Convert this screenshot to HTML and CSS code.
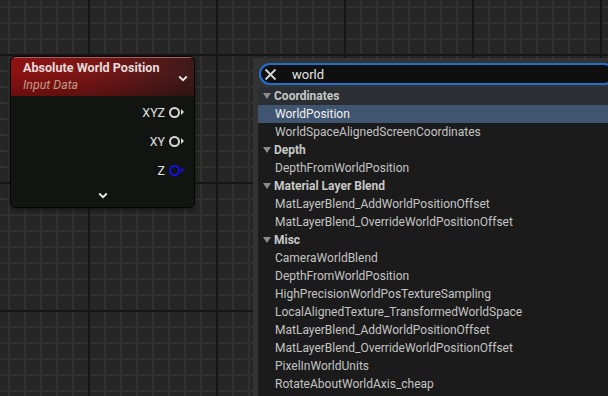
FILE: index.html
```html
<!DOCTYPE html>
<html lang="en">
<head>
  <meta charset="UTF-8">
  <meta name="viewport" content="width=device-width, initial-scale=1.0">
  <title>Material Graph</title>
  <link rel="stylesheet" href="styles.css">
</head>
<body>

<div class="graph">

  <!-- material expression node -->
  <div class="node">
    <div class="node-header">
      <div class="node-titles">
        <div class="node-title">Absolute World Position</div>
        <div class="node-sub">Input Data</div>
      </div>
      <svg class="chevron" width="10" height="7" viewBox="0 0 10 7"><path d="M1.2 1.5 L5 5.2 L8.8 1.5" fill="none" stroke="#e8e8e8" stroke-width="1.8"/></svg>
    </div>
    <div class="pins">
      <div class="pin-row"><span>XYZ</span><span class="pin"></span></div>
      <div class="pin-row"><span>XY</span><span class="pin"></span></div>
      <div class="pin-row"><span>Z</span><span class="pin blue"></span></div>
    </div>
    <div class="node-footer">
      <svg width="10" height="7" viewBox="0 0 10 7"><path d="M1.2 1.5 L5 5.2 L8.8 1.5" fill="none" stroke="#e8e8e8" stroke-width="1.8"/></svg>
    </div>
  </div>

  <!-- action menu -->
  <div class="menu">
    <div class="search">
      <svg class="clear" width="13" height="13" viewBox="0 0 13 13"><path d="M1.5 1.5 L11.5 11.5 M11.5 1.5 L1.5 11.5" stroke="#d6d6d6" stroke-width="1.8"/></svg>
      <span class="query">world</span>
    </div>
    <div class="list">
      <div class="row cat"><span class="tri"></span>Coordinates</div>
      <div class="row selected">WorldPosition</div>
      <div class="row">WorldSpaceAlignedScreenCoordinates</div>
      <div class="row cat"><span class="tri"></span>Depth</div>
      <div class="row">DepthFromWorldPosition</div>
      <div class="row cat"><span class="tri"></span>Material Layer Blend</div>
      <div class="row">MatLayerBlend_AddWorldPositionOffset</div>
      <div class="row">MatLayerBlend_OverrideWorldPositionOffset</div>
      <div class="row cat"><span class="tri"></span>Misc</div>
      <div class="row">CameraWorldBlend</div>
      <div class="row">DepthFromWorldPosition</div>
      <div class="row">HighPrecisionWorldPosTextureSampling</div>
      <div class="row">LocalAlignedTexture_TransformedWorldSpace</div>
      <div class="row">MatLayerBlend_AddWorldPositionOffset</div>
      <div class="row">MatLayerBlend_OverrideWorldPositionOffset</div>
      <div class="row">PixelInWorldUnits</div>
      <div class="row">RotateAboutWorldAxis_cheap</div>
    </div>
  </div>

</div>

</body>
</html>
```

FILE: styles.css
```css
body {
  margin: 0;
  padding: 0;
  font-family: Roboto, "Noto Sans", sans-serif;
  overflow: hidden;
}
.graph {
  position: relative;
  width: 608px;
  height: 396px;
  overflow: hidden;
  background:
    linear-gradient(to right, #161616 2px, transparent 2px) 88px 0 / 128px 128px,
    linear-gradient(to bottom, #161616 2px, transparent 2px) 0 54px / 128px 128px,
    linear-gradient(to right, #303030 2px, transparent 2px) 8px 0 / 16px 16px,
    linear-gradient(to bottom, #303030 2px, transparent 2px) 0 6px / 16px 16px,
    #262626;
}

/* node */
.node {
  position: absolute;
  left: 10px;
  top: 56px;
  width: 183px;
  height: 150px;
  background: #121412;
  border: 1px solid #050505;
  border-radius: 6px;
  box-shadow: 0 2px 4px rgba(0, 0, 0, 0.4);
  overflow: hidden;
  display: flex;
  flex-direction: column;
}
.node-header {
  height: 38px;
  display: flex;
  align-items: center;
  padding: 0 6px 0 12px;
  background:
    linear-gradient(to bottom, rgba(0, 0, 0, 0) 40%, rgba(0, 0, 0, 0.25) 100%),
    linear-gradient(to right, #8e1212 0%, #7a1616 45%, #3e1a1a 100%);
  border-top: 1px solid #b35a5a;
}
.node-titles {
  flex: 1;
}
.node-title {
  color: #e6dcdc;
  font-size: 12.6px;
  font-weight: bold;
  line-height: 16px;
  margin-top: -1px;
}
.node-sub {
  color: #c69a84;
  font-size: 12.4px;
  font-style: italic;
  line-height: 16px;
  margin-top: 1px;
}
.chevron {
  margin-top: 2px;
}
.pins {
  padding-top: 8px;
  display: flex;
  flex-direction: column;
  gap: 12px;
}
.pin-row {
  height: 17px;
  display: flex;
  justify-content: flex-end;
  align-items: center;
  gap: 4px;
  padding-right: 10px;
  color: #e0e0e0;
  font-size: 12.4px;
}
.pin {
  position: relative;
  width: 7px;
  height: 7px;
  border: 2px solid #d8d8d8;
  border-radius: 50%;
  margin-right: 4px;
}
.pin::after {
  content: "";
  position: absolute;
  right: -6px;
  top: 0;
  border-left: 3px solid #d8d8d8;
  border-top: 3.5px solid transparent;
  border-bottom: 3.5px solid transparent;
}
.pin.blue {
  border-color: #1010e6;
}
.pin.blue::after {
  border-left-color: #1010e6;
}
.node-footer {
  flex: 1;
  display: flex;
  justify-content: center;
  align-items: center;
  padding-top: 4px;
}

/* menu */
.menu {
  position: absolute;
  left: 253px;
  top: 58px;
  width: 362px;
  height: 345px;
  background: #333333;
  padding: 5px 0 0 5px;
  box-sizing: border-box;
}
.search {
  height: 22px;
  box-sizing: border-box;
  margin-left: 1px;
  border: 2px solid #2170d0;
  border-radius: 11px;
  background: #0f0f0f;
  display: flex;
  align-items: center;
  padding-left: 3px;
}
.clear {
  margin-right: 15px;
}
.query {
  color: #e4e4e4;
  font-size: 13px;
}
.list {
  background: #1b1b1b;
  margin-top: 2px;
  height: 320px;
}
.row {
  height: 18px;
  line-height: 18px;
  padding-left: 17px;
  color: #c4c4c4;
  font-size: 12px;
  white-space: nowrap;
}
.row.cat {
  padding-left: 5px;
  background: #2b2f33;
  color: #c8c8c8;
  font-weight: bold;
  display: flex;
  align-items: center;
}
.list .row.cat:not(:first-child) {
  background: transparent;
}
.tri {
  width: 0;
  height: 0;
  border-top: 6px solid #8a8a8a;
  border-left: 4.5px solid transparent;
  border-right: 4.5px solid transparent;
  margin-right: 3px;
}
.row.selected {
  background: #405670;
  color: #f2f2f2;
}
```
